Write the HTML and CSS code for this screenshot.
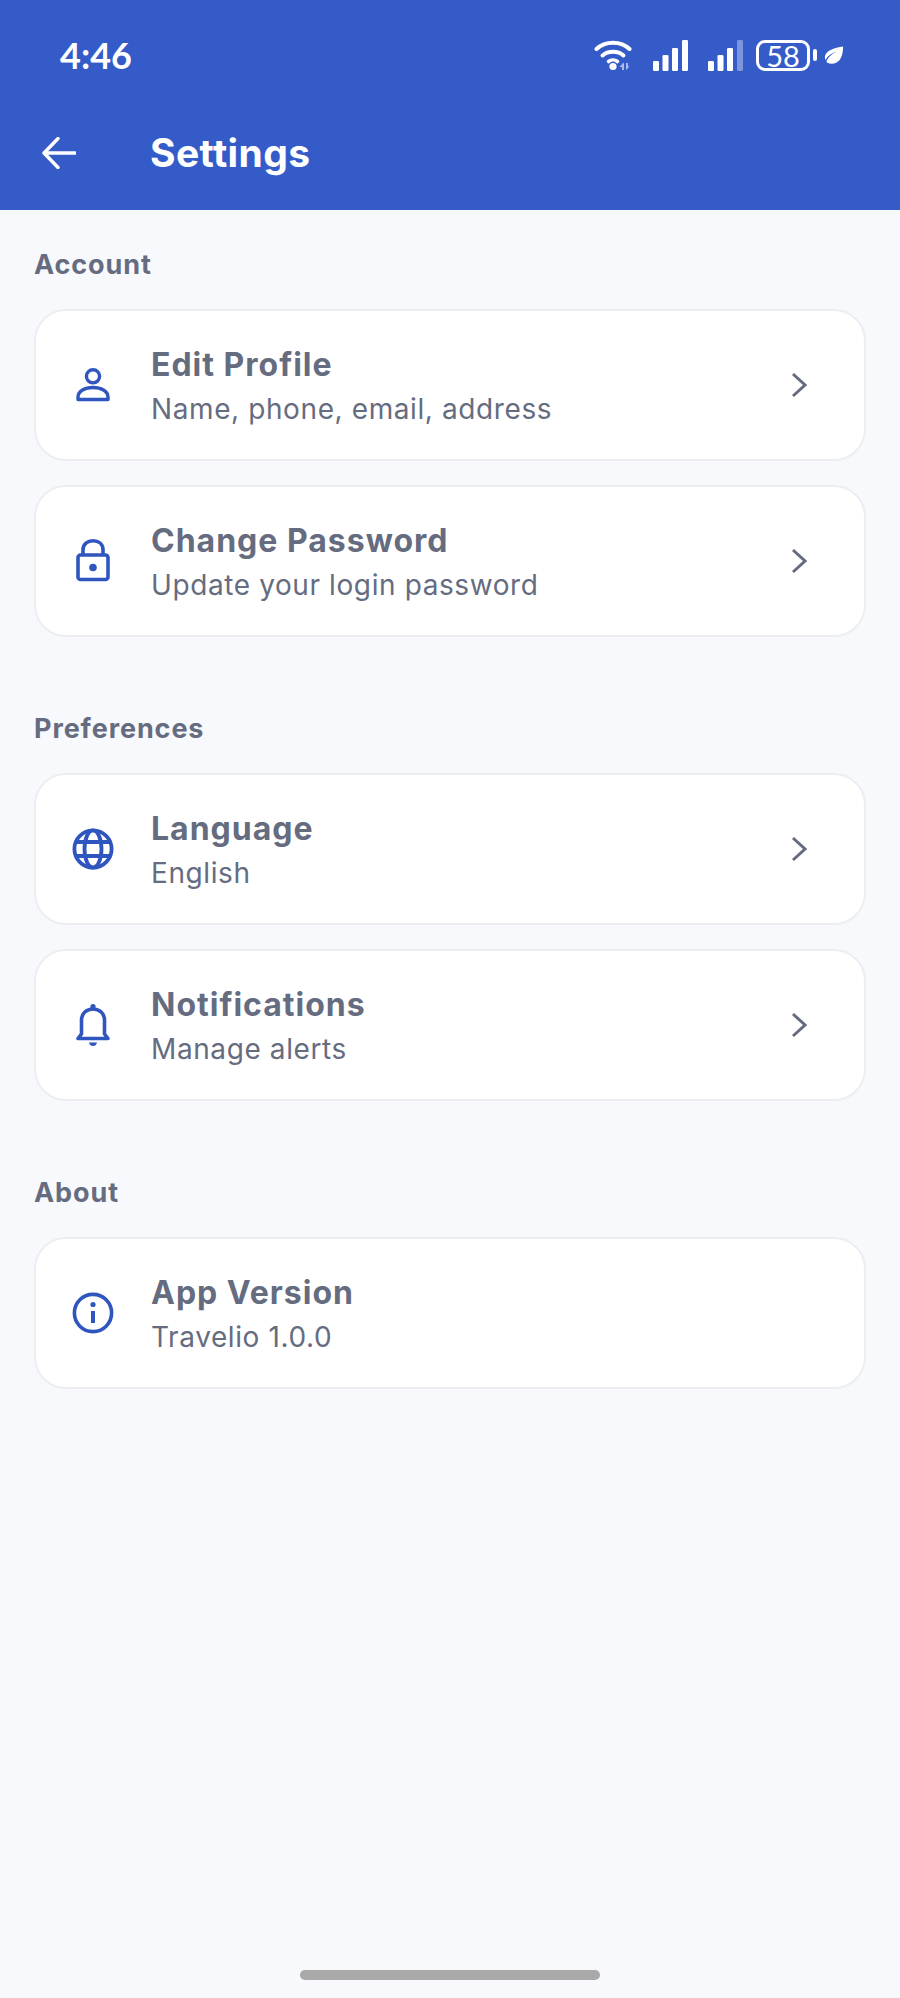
FILE: index.html
```html
<!DOCTYPE html>
<html lang="en">
<head>
<meta charset="utf-8">
<title>Settings</title>
<link rel="stylesheet" href="styles.css">
</head>
<body>
<div class="screen">
  <header class="header">
    <div class="status">
      <span class="time">4:46</span>
      <div class="status-icons">
        <svg class="ic-wifi" viewBox="0 0 40 32" width="40" height="32">
          <path d="M2.5 10 C11 1.5 27 1.5 35.5 10" fill="none" stroke="#fff" stroke-width="4" stroke-linecap="round"/>
          <path d="M8.5 16.5 C14 11.5 24 11.5 29.5 16.5" fill="none" stroke="#fff" stroke-width="4" stroke-linecap="round"/>
          <path d="M14.5 22.5 C17 20.5 21 20.5 23.5 22.5" fill="none" stroke="#fff" stroke-width="3.6" stroke-linecap="round"/>
          <circle cx="19" cy="27.5" r="3.6" fill="#fff"/>
          <path d="M29 24 L25.5 28 H28 V31 H30 V24Z M32 24 V31 L35.5 27.5 H34 V24Z" fill="#a9bbea"/>
        </svg>
        <svg class="ic-signal" viewBox="0 0 36 31" width="36" height="31">
          <rect x="0" y="21" width="6" height="10" rx="1.2" fill="#fff"/>
          <rect x="9.5" y="15" width="6" height="16" rx="1.2" fill="#fff"/>
          <rect x="19" y="8" width="6" height="23" rx="1.2" fill="#fff"/>
          <rect x="29" y="0" width="6" height="31" rx="1.2" fill="#fff"/>
        </svg>
        <svg class="ic-signal" viewBox="0 0 36 31" width="36" height="31">
          <rect x="0" y="21" width="6" height="10" rx="1.2" fill="#fff"/>
          <rect x="9.5" y="15" width="6" height="16" rx="1.2" fill="#fff"/>
          <rect x="19" y="8" width="6" height="23" rx="1.2" fill="#fff"/>
          <rect x="29" y="0" width="6" height="31" rx="1.2" fill="#7d95dc"/>
        </svg>
        <div class="battery"><span class="battery-num">58</span></div>
        <span class="battery-nub"></span>
        <svg class="ic-leaf" viewBox="0 0 22 20" width="20" height="19">
          <path d="M21 0 C21 10 18 19 8 19 C5 19 3.4 18 2.6 17 C5 11 9 8 14 6 C9 7 4.5 10 1.6 15 C-1 9 4 2 21 0Z" fill="#fff"/>
        </svg>
      </div>
    </div>
    <div class="appbar">
      <svg class="ic-back" viewBox="0 0 34 32" width="34" height="32">
        <path d="M16 1.5 L2 16 L16 30.5 M2 16 H33" fill="none" stroke="#fff" stroke-width="3.4" stroke-linecap="round" stroke-linejoin="round"/>
      </svg>
      <h1 class="title">Settings</h1>
    </div>
  </header>

  <main class="content">
    <section class="group">
      <h2 class="group-label">Account</h2>
      <a class="card">
        <span class="card-icon">
          <svg viewBox="0 0 44 44" width="44" height="44" fill="none" stroke="#2f55be" stroke-width="3.4">
            <circle cx="22" cy="13.3" r="6.6"/>
            <path d="M7 36.5 V34 C7 28 14 24.5 22 24.5 C30 24.5 37 28 37 34 V36.5 Z" stroke-linejoin="round"/>
          </svg>
        </span>
        <span class="card-text"><span class="card-title">Edit Profile</span><span class="card-sub">Name, phone, email, address</span></span>
        <svg class="chev" viewBox="0 0 16 26" width="16" height="26"><path d="M2 2 L14 13 L2 24" fill="none" stroke="#666c80" stroke-width="3"/></svg>
      </a>
      <a class="card">
        <span class="card-icon">
          <svg viewBox="0 0 44 44" width="44" height="44" fill="none" stroke="#2f55be" stroke-width="3.6">
            <rect x="7" y="16" width="30" height="24.5" rx="2.5"/>
            <path d="M12 16 V11 C12 5 16.5 1.8 22 1.8 C27.5 1.8 32 5 32 11 V16"/>
            <circle cx="22" cy="28.5" r="3.8" fill="#2f55be" stroke="none"/>
          </svg>
        </span>
        <span class="card-text"><span class="card-title">Change Password</span><span class="card-sub">Update your login password</span></span>
        <svg class="chev" viewBox="0 0 16 26" width="16" height="26"><path d="M2 2 L14 13 L2 24" fill="none" stroke="#666c80" stroke-width="3"/></svg>
      </a>
    </section>

    <section class="group">
      <h2 class="group-label">Preferences</h2>
      <a class="card">
        <span class="card-icon">
          <svg viewBox="0 0 44 44" width="44" height="44" fill="none" stroke="#2f55be" stroke-width="3.8">
            <circle cx="22" cy="22" r="18.6"/>
            <ellipse cx="22" cy="22" rx="8.5" ry="18.6"/>
            <path d="M4.5 15 H39.5 M4.5 29 H39.5"/>
          </svg>
        </span>
        <span class="card-text"><span class="card-title">Language</span><span class="card-sub">English</span></span>
        <svg class="chev" viewBox="0 0 16 26" width="16" height="26"><path d="M2 2 L14 13 L2 24" fill="none" stroke="#666c80" stroke-width="3"/></svg>
      </a>
      <a class="card">
        <span class="card-icon">
          <svg viewBox="0 0 44 44" width="44" height="44" fill="none" stroke="#2f55be" stroke-width="3.6">
            <path d="M7 35.5 H37 L33.5 31 V17 C33.5 10.5 28.5 6 22 6 C15.5 6 10.5 10.5 10.5 17 V31 Z" stroke-linejoin="round"/>
            <circle cx="22" cy="3.6" r="2.6" fill="#2f55be" stroke="none"/>
            <path d="M18 39.5 H26 C25.5 42 24 43 22 43 C20 43 18.5 42 18 39.5 Z" fill="#2f55be" stroke="none"/>
          </svg>
        </span>
        <span class="card-text"><span class="card-title">Notifications</span><span class="card-sub">Manage alerts</span></span>
        <svg class="chev" viewBox="0 0 16 26" width="16" height="26"><path d="M2 2 L14 13 L2 24" fill="none" stroke="#666c80" stroke-width="3"/></svg>
      </a>
    </section>

    <section class="group">
      <h2 class="group-label">About</h2>
      <a class="card">
        <span class="card-icon">
          <svg viewBox="0 0 44 44" width="44" height="44" fill="none" stroke="#2f55be" stroke-width="3.6">
            <circle cx="22" cy="22" r="18.6"/>
            <path d="M22 20 V32" stroke-width="4"/>
            <circle cx="22" cy="13.5" r="2.6" fill="#2f55be" stroke="none"/>
          </svg>
        </span>
        <span class="card-text"><span class="card-title">App Version</span><span class="card-sub">Travelio 1.0.0</span></span>
      </a>
    </section>
  </main>
  <div class="home-bar"></div>
</div>
</body>
</html>
```
FILE: styles.css
```css
* { box-sizing: border-box; }
html, body { margin: 0; padding: 0; }
body {
  background: #f8f9fd;
  font-family: "Inter", "Noto Sans", sans-serif;
  color: #666c80;
}
.screen {
  width: 900px;
  height: 1998px;
  display: flex;
  flex-direction: column;
  background: #f8f9fd;
}
.header {
  height: 210px;
  background: #345bc8;
  color: #fff;
  flex: none;
}
.status {
  height: 110px;
  display: flex;
  align-items: center;
  justify-content: space-between;
  padding: 0 56px 0 60px;
}
.time {
  font-family: "Lato", "Noto Sans", sans-serif;
  font-size: 36px;
  font-weight: 700;
}
.status-icons {
  display: flex;
  align-items: center;
}
.ic-wifi { margin-right: 19px; }
.ic-signal { margin-right: 19px; }
.ic-signal + .battery { margin-left: -7px; }
.battery {
  width: 54px;
  height: 31px;
  border: 3px solid #fff;
  border-radius: 9px;
  display: flex;
  align-items: center;
  justify-content: center;
}
.battery-num {
  font-family: "Lato", "Noto Sans", sans-serif;
  font-size: 29px;
  font-weight: 400;
  line-height: 1;
}
.battery-nub {
  width: 4px;
  height: 12px;
  background: #fff;
  border-radius: 2px;
  margin: 0 7px 0 3px;
}
.appbar {
  height: 100px;
  display: flex;
  align-items: center;
  padding: 0 0 14px 42px;
}
.ic-back { flex: none; }
.title {
  margin: 0 0 0 74px;
  font-size: 39px;
  font-weight: 700;
  line-height: 50px;
  letter-spacing: 0.4px;
}
.content {
  padding: 35px 34px 0;
  display: flex;
  flex-direction: column;
  gap: 72px;
  flex: 1;
}
.group {
  display: flex;
  flex-direction: column;
  gap: 24px;
}
.group-label {
  margin: 0;
  font-size: 27px;
  font-weight: 700;
  line-height: 40px;
  letter-spacing: 0.9px;
}
.card {
  height: 152px;
  background: #fff;
  border: 2px solid #eceef2;
  border-radius: 32px;
  display: flex;
  align-items: center;
  padding: 0 57px 0 35px;
}
.card-icon {
  width: 44px;
  height: 44px;
  flex: none;
  display: block;
}
.card-icon svg { display: block; }
.card-text {
  margin-left: 36px;
  padding-top: 3px;
  flex: 1;
  display: flex;
  flex-direction: column;
}
.card-title {
  font-size: 32px;
  font-weight: 700;
  line-height: 45px;
  letter-spacing: 1px;
}
.card-sub {
  font-size: 28px;
  font-weight: 400;
  line-height: 44px;
  letter-spacing: 0.6px;
}
.chev { flex: none; }
.home-bar {
  width: 300px;
  height: 10px;
  border-radius: 5px;
  background: #a9a9a9;
  margin: 0 auto 18px;
  flex: none;
}
```
